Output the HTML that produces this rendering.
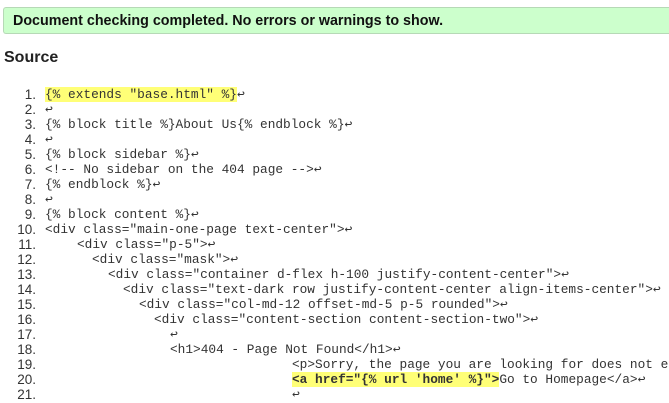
<!DOCTYPE html>
<html><head><style>
html,body{margin:0;width:669px;height:403px;overflow:hidden;background:#fff;font-family:"Liberation Sans",sans-serif;color:#222}
#w{position:relative;width:669px;height:403px;overflow:hidden}
.ok{position:absolute;left:3px;top:7px;width:666px;height:27px;background:#ccffcc;border:1px solid #b6d9b6;border-right:none;border-radius:3px 0 0 3px;box-sizing:border-box}
.ok span{position:absolute;left:9px;top:5px;font-weight:bold;font-size:14.3px;color:#111;white-space:nowrap}
h2{position:absolute;left:4px;top:49px;margin:0;font-size:16px;font-weight:bold;color:#222}
.l{position:absolute;left:0;width:669px;height:15px;font-family:"Liberation Mono",monospace;font-size:12.8px;white-space:pre;line-height:15px;color:#333;overflow:hidden}
.n{position:absolute;right:633px;font-family:"Liberation Sans",sans-serif;font-size:13.5px;color:#333}
.c{position:absolute}
.h{background:#ffff77}
.b{font-weight:bold}
</style></head><body><div id="w">
<div class="ok"><span>Document checking completed. No errors or warnings to show.</span></div>
<h2>Source</h2>
<div class="l" style="top:87px"><span class="n">1.</span><span class="c" style="left:45px"><span class="h">{% extends "base.html" %}</span>↩</span></div>
<div class="l" style="top:102px"><span class="n">2.</span><span class="c" style="left:45px">↩</span></div>
<div class="l" style="top:117px"><span class="n">3.</span><span class="c" style="left:45px">{% block title %}About Us{% endblock %}↩</span></div>
<div class="l" style="top:132px"><span class="n">4.</span><span class="c" style="left:45px">↩</span></div>
<div class="l" style="top:147px"><span class="n">5.</span><span class="c" style="left:45px">{% block sidebar %}↩</span></div>
<div class="l" style="top:162px"><span class="n">6.</span><span class="c" style="left:45px">&lt;!-- No sidebar on the 404 page --&gt;↩</span></div>
<div class="l" style="top:177px"><span class="n">7.</span><span class="c" style="left:45px">{% endblock %}↩</span></div>
<div class="l" style="top:192px"><span class="n">8.</span><span class="c" style="left:45px">↩</span></div>
<div class="l" style="top:207px"><span class="n">9.</span><span class="c" style="left:45px">{% block content %}↩</span></div>
<div class="l" style="top:222px"><span class="n">10.</span><span class="c" style="left:45px">&lt;div class="main-one-page text-center"&gt;↩</span></div>
<div class="l" style="top:237px"><span class="n">11.</span><span class="c" style="left:77px">&lt;div class="p-5"&gt;↩</span></div>
<div class="l" style="top:252px"><span class="n">12.</span><span class="c" style="left:92px">&lt;div class="mask"&gt;↩</span></div>
<div class="l" style="top:267px"><span class="n">13.</span><span class="c" style="left:108px">&lt;div class="container d-flex h-100 justify-content-center"&gt;↩</span></div>
<div class="l" style="top:282px"><span class="n">14.</span><span class="c" style="left:123px">&lt;div class="text-dark row justify-content-center align-items-center"&gt;↩</span></div>
<div class="l" style="top:297px"><span class="n">15.</span><span class="c" style="left:139px">&lt;div class="col-md-12 offset-md-5 p-5 rounded"&gt;↩</span></div>
<div class="l" style="top:312px"><span class="n">16.</span><span class="c" style="left:154px">&lt;div class="content-section content-section-two"&gt;↩</span></div>
<div class="l" style="top:327px"><span class="n">17.</span><span class="c" style="left:170px">↩</span></div>
<div class="l" style="top:342px"><span class="n">18.</span><span class="c" style="left:170px">&lt;h1&gt;404 - Page Not Found&lt;/h1&gt;↩</span></div>
<div class="l" style="top:357px"><span class="n">19.</span><span class="c" style="left:292px">&lt;p&gt;Sorry, the page you are looking for does not e</span></div>
<div class="l" style="top:372px"><span class="n">20.</span><span class="c" style="left:292px"><span class="h b">&lt;a href="{% url 'home' %}"&gt;</span>Go to Homepage&lt;/a&gt;↩</span></div>
<div class="l" style="top:387px"><span class="n">21.</span><span class="c" style="left:292px">↩</span></div>
</div></body></html>
